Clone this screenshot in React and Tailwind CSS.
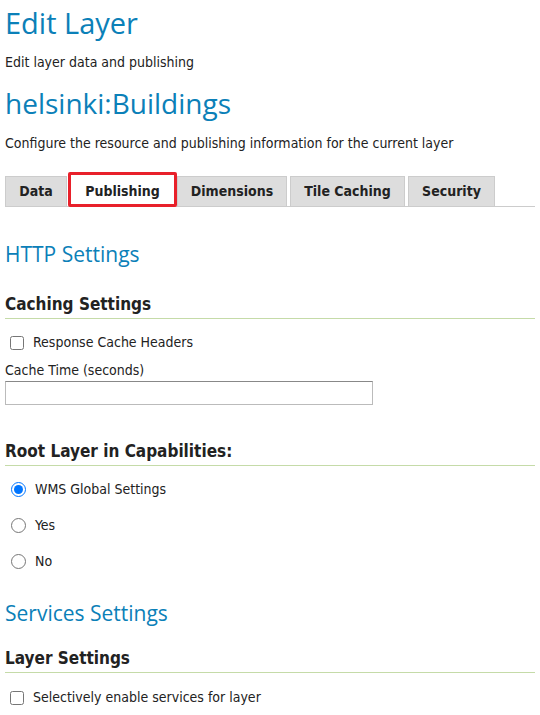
import React from "react";

const tabs = [
  { name: "Data", w: "w-[62px]" },
  { name: "Publishing", w: "w-[109px]" },
  { name: "Dimensions", w: "w-[110px]" },
  { name: "Tile Caching", w: "w-[115px]" },
  { name: "Security", w: "w-[87px]" },
];

const SectionHead = ({ children }) => (
  <div className="border-b border-[#c5dba8] pb-[2px] text-[17px] leading-[24px] font-bold text-[#222]">{children}</div>
);

const Radio = ({ label, checked }) => (
  <label className="flex items-center gap-[9px] h-[36px]">
    <input type="radio" name="root" defaultChecked={checked} className="ml-[6px] w-[15px] h-[15px] accent-[#0075ff]" />
    <span>{label}</span>
  </label>
);

const App = () => {
  return (
    <div className="px-[5px] text-[14px] text-[#222] font-['DejaVu_Sans_Condensed','DejaVu_Sans',sans-serif]">
      <h1 className="text-[29px] leading-[44px] text-[#0b80b8] font-['Open_Sans',sans-serif] pt-px">Edit Layer</h1>
      <p className="mt-[7px] leading-[20px]">Edit layer data and publishing</p>
      <h2 className="mt-[11px] text-[28px] leading-[40px] text-[#0b80b8] font-['Open_Sans',sans-serif]">helsinki:Buildings</h2>
      <p className="mt-[10px] leading-[20px]">Configure the resource and publishing information for the current layer</p>

      <div className="mt-[23px] flex items-end border-b border-[#ccc] h-[31px]">
        {tabs.map((t, i) =>
          t.name === "Publishing" ? (
            <div key={t.name} className={`${t.w} h-[35px] -mb-px pt-[3px] flex items-center justify-center border-[3px] border-[#e8202a] rounded-[2px] bg-white font-bold`}>
              {t.name}
            </div>
          ) : (
            <div key={t.name} className={`${t.w} h-[30px] flex items-center justify-center bg-[#ddd] border border-b-0 border-[#ccc] font-bold ${i === 0 ? "mr-px" : "mr-[3px]"}`}>
              {t.name}
            </div>
          )
        )}
      </div>

      <h3 className="mt-[32px] text-[21px] leading-[30px] text-[#0b80b8] font-['Open_Sans',sans-serif]">HTTP Settings</h3>
      <div className="mt-[23px]">
        <SectionHead>Caching Settings</SectionHead>
      </div>
      <label className="mt-[13px] flex items-center gap-[9px]">
        <input type="checkbox" className="ml-[5px] w-[14px] h-[14px]" />
        <span>Response Cache Headers</span>
      </label>
      <div className="mt-[7px] leading-[20px]">Cache Time (seconds)</div>
      <input type="text" className="mt-px block w-[368px] h-[24px] border border-[#bbb] border-t-[#888]" />

      <div className="mt-[34px]">
        <SectionHead>Root Layer in Capabilities:</SectionHead>
      </div>
      <div className="mt-[5px]">
        <Radio label="WMS Global Settings" checked />
        <Radio label="Yes" />
        <Radio label="No" />
      </div>

      <h3 className="mt-[19px] text-[21px] leading-[30px] text-[#0b80b8] font-['Open_Sans',sans-serif]">Services Settings</h3>
      <div className="mt-[18px]">
        <SectionHead>Layer Settings</SectionHead>
      </div>
      <label className="mt-[14px] flex items-center gap-[9px]">
        <input type="checkbox" className="ml-[5px] w-[14px] h-[14px]" />
        <span>Selectively enable services for layer</span>
      </label>
    </div>
  );
};

export default App;
